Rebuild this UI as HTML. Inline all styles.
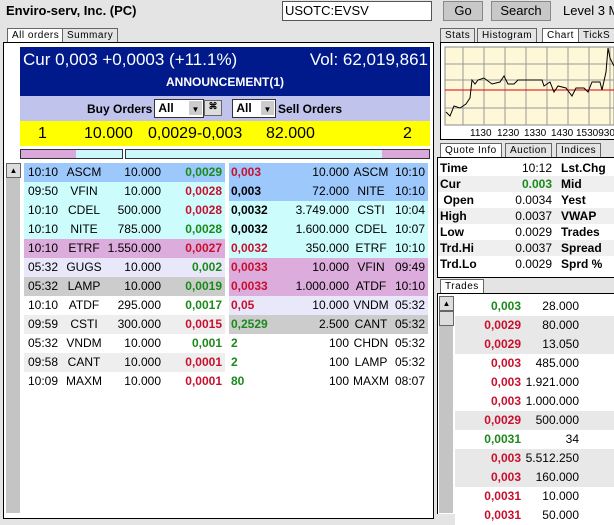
<html><head><style>
body{margin:0;width:614px;height:513px;overflow:hidden;background:#e4e4e4;font-family:"Liberation Sans",sans-serif;font-size:12px;position:relative}
.a{position:absolute;white-space:nowrap}
.row{position:absolute;height:19px;line-height:19px;font-size:12px;white-space:nowrap}
.row span{position:absolute}
.g{color:#1a8a1a;font-weight:bold}.r{color:#c8102e;font-weight:bold}.k{color:#000;font-weight:bold}
.tab{position:absolute;height:13px;line-height:13px;font-size:10px;border:1px solid #666;border-bottom:none;background:#e4e4e4;padding:0 4px;letter-spacing:.5px}
.btn{position:absolute;background:#c8c8c8;border:1px solid #888;text-align:center;font-size:13px;height:18px;line-height:18px}
.q{position:absolute;height:16px;line-height:16px;font-size:12px;width:176px;left:438px}
.q span{position:absolute}
</style></head><body>
<div class="a" style="left:6px;top:3px;font-size:13px;font-weight:bold">Enviro-serv, Inc. (PC)</div>
<div class="a" style="left:282px;top:1px;width:146px;height:18px;background:#fff;border:1px solid #555;font-size:13px;line-height:18px;padding-left:2px">USOTC:EVSV</div>
<div class="btn" style="left:443px;top:1px;width:38px">Go</div>
<div class="btn" style="left:491px;top:1px;width:58px">Search</div>
<div class="a" style="left:563px;top:3px;font-size:13px">Level 3 M</div>
<div class="tab" style="left:7px;top:28px;background:#fff">All orders</div>
<div class="tab" style="left:62px;top:28px">Summary</div>
<div class="a" style="left:3px;top:42px;width:429px;height:475px;border:1px solid #000;background:#fff"></div>
<div class="a" style="left:20px;top:47px;width:410px;height:49px;background:#001a8c;color:#fff">
<div class="a" style="left:3px;top:3px;font-size:17px">Cur 0,003 +0,0003 (+11.1%)</div>
<div class="a" style="right:2px;top:3px;font-size:17px">Vol: 62,019,861</div>
<div class="a" style="left:0;width:410px;top:28px;text-align:center;font-weight:bold;font-size:12px">ANNOUNCEMENT(1)</div></div>
<div class="a" style="left:20px;top:96px;width:410px;height:25px;background:#c0c4ec;font-weight:bold;font-size:12px">
<div class="a" style="left:67px;top:6px">Buy Orders</div>
<div class="a" style="left:134px;top:3px;width:48px;height:17px;background:#fff;border:1px solid #333;font-size:12px;line-height:17px">&nbsp;All<span class="a" style="right:1px;top:1px;width:13px;height:14px;background:#ccc;font-size:8px;text-align:center">▼</span></div>
<div class="a" style="left:184px;top:4px;width:16px;height:14px;background:#ddd;border:1px solid #666;font-size:9px;text-align:center">⌘</div>
<div class="a" style="left:212px;top:3px;width:42px;height:17px;background:#fff;border:1px solid #333;font-size:12px;line-height:17px">&nbsp;All<span class="a" style="right:1px;top:1px;width:13px;height:14px;background:#ccc;font-size:8px;text-align:center">▼</span></div>
<div class="a" style="left:258px;top:6px">Sell Orders</div></div>
<div class="a" style="left:20px;top:121px;width:410px;height:25px;background:#ffff00;font-size:16px;line-height:25px">
<span class="a" style="left:18px">1</span><span class="a" style="left:64px">10.000</span><span class="a" style="left:128px">0,0029-0,003</span><span class="a" style="left:246px">82.000</span><span class="a" style="left:383px">2</span></div>
<div class="a" style="left:20px;top:149px;width:101px;height:8px;border:1px solid #333;background:linear-gradient(90deg,#dba8dc 55px,#ccf8fc 55px)"></div>
<div class="a" style="left:125px;top:149px;width:303px;height:8px;border:1px solid #333;background:linear-gradient(90deg,#ccf8fc 256px,#dba8dc 256px)"></div>
<div class="a" style="left:6px;top:163px;width:14px;height:350px;background:#c4c4c4"></div>
<div class="a" style="left:6px;top:163px;width:13px;height:13px;background:#ddd;border:1px solid #666;font-size:8px;text-align:center;line-height:13px">▲</div>
<div id="L"></div>
<div class="tab" style="left:440px;top:28px">Stats</div><div class="tab" style="left:477px;top:28px">Histogram</div><div class="tab" style="left:542px;top:28px;background:#fff">Chart</div><div class="tab" style="left:578px;top:28px">TickS</div>
<div class="a" style="left:440px;top:42px;width:174px;height:96px;border:1px solid #000;background:#fff"></div>
<svg class="a" style="left:442px;top:44px" width="172" height="94">
<rect x="3" y="3" width="169" height="78" fill="#fff8d8" stroke="#888"/>
<g stroke="#999" stroke-width="1">
<line x1="21" y1="3" x2="21" y2="81"/><line x1="42" y1="3" x2="42" y2="81"/><line x1="63" y1="3" x2="63" y2="81"/><line x1="84" y1="3" x2="84" y2="81"/><line x1="105" y1="3" x2="105" y2="81"/><line x1="126" y1="3" x2="126" y2="81"/><line x1="147" y1="3" x2="147" y2="81"/><line x1="168" y1="3" x2="168" y2="81"/>
<line x1="3" y1="20" x2="172" y2="20"/><line x1="3" y1="36" x2="172" y2="36"/><line x1="3" y1="64" x2="172" y2="64"/></g>
<line x1="3" y1="46" x2="172" y2="46" stroke="#d00"/>
<polyline fill="none" stroke="#000" points="4,68 8,72 12,62 18,64 24,60 28,54 30,36 33,40 36,36 42,34 50,40 58,38 62,32 66,40 72,40 76,36 100,36 102,42 108,38 112,48 116,42 124,44 130,52 134,44 142,44 146,48 150,38 158,38 160,46 164,28 166,4 168,14 172,22"/>
<g font-size="10" fill="#000"><text x="28" y="92">1130</text><text x="55" y="92">1230</text><text x="82" y="92">1330</text><text x="109" y="92">1430</text><text x="134" y="92">1530930</text></g></svg>
<div class="tab" style="left:440px;top:143px;background:#fff">Quote Info</div><div class="tab" style="left:505px;top:143px">Auction</div><div class="tab" style="left:556px;top:143px">Indices</div>
<div class="a" style="left:437px;top:157px;width:177px;height:119px;border:1px solid #000;background:#fff"></div>
<div id="Q"></div>
<div class="tab" style="left:440px;top:279px;background:#fff">Trades</div>
<div class="a" style="left:437px;top:293px;width:177px;height:220px;border-top:1px solid #000;border-left:1px solid #000;background:#fff"></div>
<div class="a" style="left:439px;top:296px;width:14px;height:217px;background:#c4c4c4"></div>
<div class="a" style="left:439px;top:296px;width:13px;height:13px;background:#ddd;border:1px solid #666;font-size:8px;text-align:center;line-height:13px">▲</div>
<div class="a" style="left:439px;top:311px;width:13px;height:13px;background:#ddd;border:1px solid #666"></div>
<div id="T"></div>
<script>
var L=[["10:10","ASCM","10.000","0,0029","g","#9cc8fc","0,003","r","10.000","ASCM","10:10","#9cc8fc"],
["09:50","VFIN","10.000","0,0028","r","#ccfcfc","0,003","k","72.000","NITE","10:10","#9cc8fc"],
["10:10","CDEL","500.000","0,0028","r","#ccfcfc","0,0032","k","3.749.000","CSTI","10:04","#ccfcfc"],
["10:10","NITE","785.000","0,0028","g","#ccfcfc","0,0032","k","1.600.000","CDEL","10:07","#ccfcfc"],
["10:10","ETRF","1.550.000","0,0027","r","#dcacdc","0,0032","r","350.000","ETRF","10:10","#ccfcfc"],
["05:32","GUGS","10.000","0,002","g","#e8e8fa","0,0033","r","10.000","VFIN","09:49","#dcacdc"],
["05:32","LAMP","10.000","0,0019","g","#cccccc","0,0033","r","1.000.000","ATDF","10:10","#dcacdc"],
["10:10","ATDF","295.000","0,0017","g","#ffffff","0,05","r","10.000","VNDM","05:32","#e8e8fa"],
["09:59","CSTI","300.000","0,0015","r","#eeeeee","0,2529","g","2.500","CANT","05:32","#cccccc"],
["05:32","VNDM","10.000","0,001","g","#ffffff","2","g","100","CHDN","05:32","#ffffff"],
["09:58","CANT","10.000","0,0001","r","#eeeeee","2","g","100","LAMP","05:32","#ffffff"],
["10:09","MAXM","10.000","0,0001","r","#ffffff","80","g","100","MAXM","08:07","#ffffff"]];
var h="";L.forEach(function(d,i){var y=163+i*19;
h+='<div class="row" style="left:24px;top:'+y+'px;width:201px;background:'+d[5]+'"><span style="left:4px">'+d[0]+'</span><span style="left:40px;width:40px;text-align:center">'+d[1]+'</span><span style="right:64px">'+d[2]+'</span><span class="'+d[4]+'" style="right:3px">'+d[3]+'</span></div>';
h+='<div class="row" style="left:229px;top:'+y+'px;width:199px;background:'+d[11]+'"><span class="'+d[7]+'" style="left:2px">'+d[6]+'</span><span style="right:79px">'+d[8]+'</span><span style="left:123px;width:38px;text-align:center">'+d[9]+'</span><span style="right:3px">'+d[10]+'</span></div>';});
document.getElementById("L").innerHTML=h;
var Q=[["Time","10:12","Lst.Chg",""],["Cur","0.003","Mid","g"],[" Open","0.0034","Yest",""],["High","0.0037","VWAP",""],["Low","0.0029","Trades",""],["Trd.Hi","0.0037","Spread",""],["Trd.Lo","0.0029","Sprd %",""]];
h="";Q.forEach(function(d,i){h+='<div class="q" style="top:'+(160+i*16)+'px;background:'+(i%2?'#efefef':'#fff')+'"><span style="left:2px;font-weight:bold;white-space:pre">'+d[0]+'</span><span class="'+d[3]+'" style="right:62px">'+d[1]+'</span><span style="left:123px;font-weight:bold">'+d[2]+'</span></div>'});
document.getElementById("Q").innerHTML=h;
var T=[["0,003","g","28.000","#fff"],["0,0029","r","80.000","#e8e8e8"],["0,0029","r","13.050","#e8e8e8"],["0,003","r","485.000","#fff"],["0,003","r","1.921.000","#fff"],["0,003","r","1.000.000","#fff"],["0,0029","r","500.000","#e8e8e8"],["0,0031","g","34","#fff"],["0,003","r","5.512.250","#e8e8e8"],["0,003","r","160.000","#e8e8e8"],["0,0031","r","10.000","#fff"],["0,0031","r","50.000","#fff"]];
h="";T.forEach(function(d,i){h+='<div class="row" style="left:455px;top:'+(297+i*19)+'px;width:159px;background:'+d[3]+'"><span class="'+d[1]+'" style="right:93px">'+d[0]+'</span><span style="right:35px">'+d[2]+'</span></div>'});
document.getElementById("T").innerHTML=h;
</script></body></html>
